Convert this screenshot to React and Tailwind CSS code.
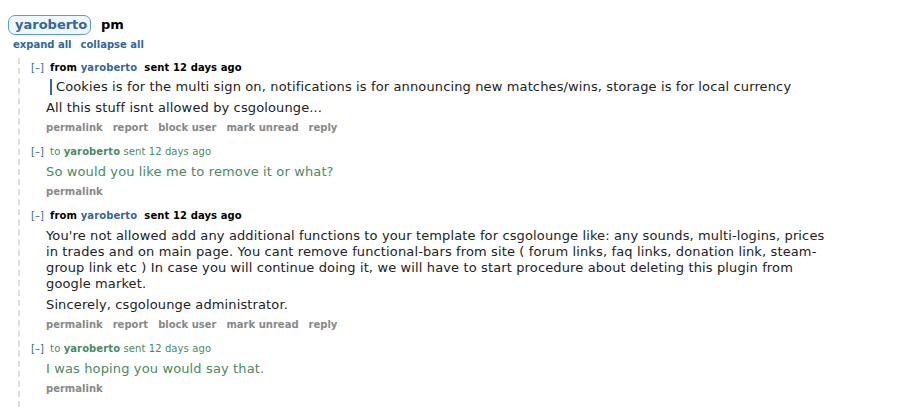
const FONT = { fontFamily: '"DejaVu Sans", Verdana, sans-serif' }

const ACTIONS = ['permalink', 'report', 'block user', 'mark unread', 'reply']

function Buttons({ items }) {
  return (
    <ul className="flex gap-[10px] mt-[6px] text-[10px] leading-[12px] font-bold text-[#888]">
      {items.map(b => (
        <li key={b}>{b}</li>
      ))}
    </ul>
  )
}

function Message({ dir, children, items }) {
  const sent = dir === 'to'
  return (
    <div className="pl-[11px] pb-[12px]">
      <p className="text-[10px] leading-[12px] tracking-[0.1px]">
        <span className="text-[#369] mr-[6px]">[–]</span>
        {sent ? (
          <span className="text-[#4a8a62]">
            to <b>yaroberto</b> sent 12 days ago
          </span>
        ) : (
          <span className="font-bold text-black">
            from <span className="text-[#369]">yaroberto</span>&nbsp; sent 12 days ago
          </span>
        )}
      </p>
      <div className={`pl-[15px] mt-[6px] text-[13px] leading-[16px] tracking-[0.13px] max-w-[805px] ${sent ? 'text-[#4a8a62]' : 'text-[#222]'}`}>
        {children}
      </div>
      <div className="pl-[15px]">
        <Buttons items={items} />
      </div>
    </div>
  )
}

export default function App() {
  return (
    <div className="bg-white w-[907px] h-[417px] overflow-hidden" style={FONT}>
      <div className="flex items-center pt-[15px] pl-[8px]">
        <span className="border border-[#5f99cf] bg-[#eff7ff] rounded-[7px] text-[#369] font-bold text-[13px] leading-[18px] px-[6px] w-[83px]">
          yaroberto
        </span>
        <span className="ml-[10px] font-bold text-[13px] text-black">pm</span>
      </div>
      <div className="flex gap-[9px] pl-[13px] mt-[4px] text-[10px] leading-[12px] font-bold text-[#369]">
        <span>expand all</span>
        <span>collapse all</span>
      </div>
      <div className="ml-[18px] mt-[7px] border-l-2 border-dashed border-[#ddd] pt-[4px]">
        <Message dir="from" items={ACTIONS}>
          <blockquote className="border-l-2 border-[#369] pl-[4px] ml-[4px] -mt-[1px] mb-[5px]">
            Cookies is for the multi sign on, notifications is for announcing new matches/wins, storage is for local currency
          </blockquote>
          <p>All this stuff isnt allowed by csgolounge...</p>
        </Message>
        <Message dir="to" items={['permalink']}>
          <p>So would you like me to remove it or what?</p>
        </Message>
        <Message dir="from" items={ACTIONS}>
          <p className="mb-[5px]">
            You're not allowed add any additional functions to your template for csgolounge like: any sounds, multi-logins, prices in trades and on main page. You cant remove functional-bars from site ( forum links, faq links, donation link, steam-group link etc ) In case you will continue doing it, we will have to start procedure about deleting this plugin from google market.
          </p>
          <p>Sincerely, csgolounge administrator.</p>
        </Message>
        <Message dir="to" items={['permalink']}>
          <p>I was hoping you would say that.</p>
        </Message>
      </div>
    </div>
  )
}
